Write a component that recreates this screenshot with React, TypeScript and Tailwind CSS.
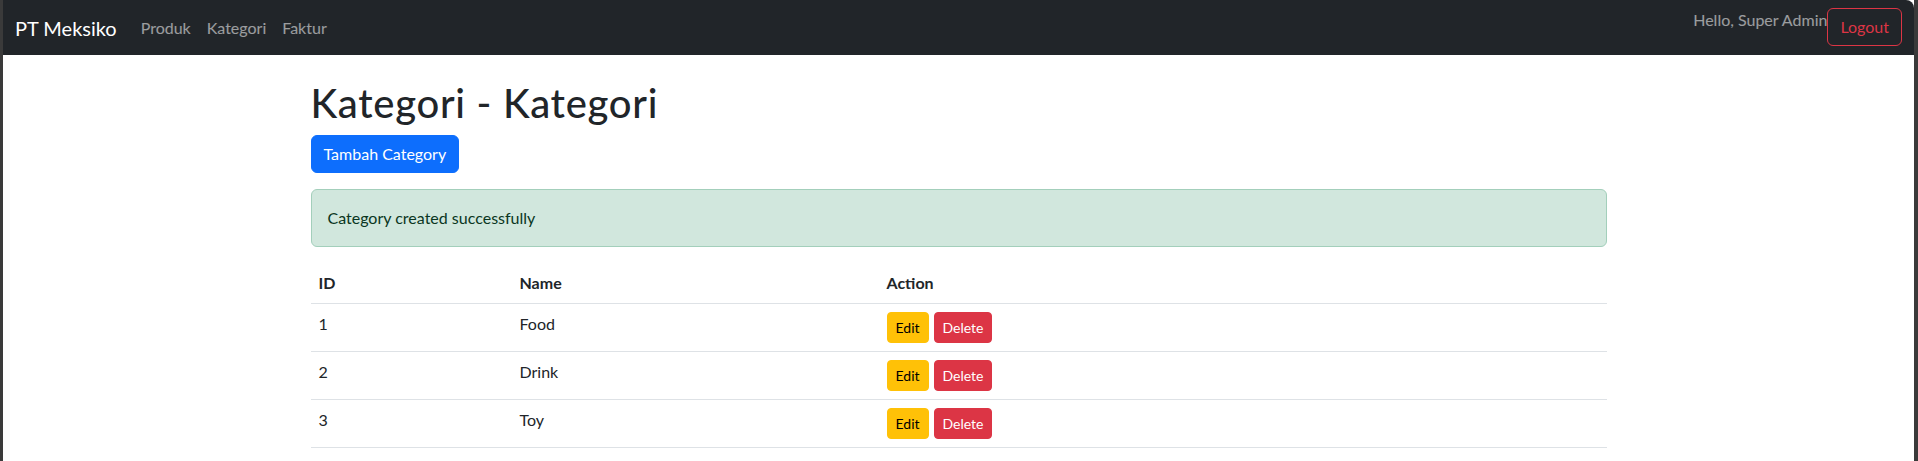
import * as React from "react";

const categories = [
  { id: 1, name: "Food" },
  { id: 2, name: "Drink" },
  { id: 3, name: "Toy" },
];

const App = () => {
  return (
    <div className="min-h-screen bg-[#3a3a3a] pl-[3px] pr-[4px] font-['Segoe_UI','Lato','Noto_Sans',sans-serif] text-base text-[#212529]">
      <div className="min-h-[461px] bg-white">
        {/* Navbar */}
        <nav className="flex h-[55px] items-center rounded-tr-lg bg-[#212529] px-3">
          <a href="#" className="mr-4 py-[5px] text-xl leading-[30px] text-white">PT Meksiko</a>
          <ul className="flex">
            {["Produk", "Kategori", "Faktur"].map((item) => (
              <li key={item}>
                <a href="#" className="block px-2 py-2 leading-6 text-white/55">{item}</a>
              </li>
            ))}
          </ul>
          <div className="ml-auto flex items-start self-stretch pt-2">
            <span className="leading-6 text-white/55">Hello, Super Admin</span>
            <button className="rounded-md border border-[#dc3545] px-3 py-1.5 leading-6 text-[#dc3545]">Logout</button>
          </div>
        </nav>

        {/* Konten */}
        <div className="mx-auto mt-6 w-full max-w-[1320px] px-3">
          <h1 className="mb-2 text-[40px] font-medium leading-[48px] tracking-[0.7px]">Kategori - Kategori</h1>
          <button className="rounded-md border border-[#0d6efd] bg-[#0d6efd] px-3 py-1.5 leading-6 text-white">Tambah Category</button>

          <div className="my-4 rounded-md border border-[#a3cfbb] bg-[#d1e7dd] p-4 leading-6 text-[#0a3622]">
            Category created successfully
          </div>

          <table className="w-full border-collapse">
            <thead>
              <tr>
                <th className="w-[201px] border-b border-[#dee2e6] p-2 text-left font-bold leading-6">ID</th>
                <th className="w-[367px] border-b border-[#dee2e6] p-2 text-left font-bold leading-6">Name</th>
                <th className="border-b border-[#dee2e6] p-2 text-left font-bold leading-6">Action</th>
              </tr>
            </thead>
            <tbody>
              {categories.map((c) => (
                <tr key={c.id}>
                  <td className="border-b border-[#dee2e6] p-2 align-top leading-6">{c.id}</td>
                  <td className="border-b border-[#dee2e6] p-2 align-top leading-6">{c.name}</td>
                  <td className="border-b border-[#dee2e6] p-2 align-top leading-6">
                    <div className="flex gap-[5px]">
                      <a href="#" className="rounded border border-[#ffc107] bg-[#ffc107] px-2 py-1 text-sm leading-[21px] text-black">Edit</a>
                      <button className="rounded border border-[#dc3545] bg-[#dc3545] px-2 py-1 text-sm leading-[21px] text-white">Delete</button>
                    </div>
                  </td>
                </tr>
              ))}
            </tbody>
          </table>
        </div>
      </div>
    </div>
  );
};

export default App;
